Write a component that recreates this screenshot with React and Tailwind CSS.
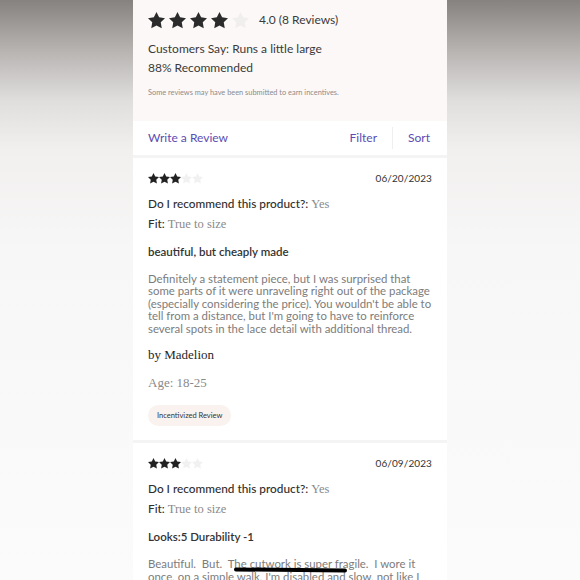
import React from 'react';

const STAR = '12,2 15.09,8.26 22,9.27 17,14.14 18.18,21.02 12,17.77 5.82,21.02 7,14.14 2,9.27 8.91,8.26';

function Stars({ count, size, gap, on, off }) {
  return (
    <div className={`flex items-center ${gap}`}>
      {[0, 1, 2, 3, 4].map((i) => (
        <svg key={i} width={size} height={size} viewBox="2 2 20 20">
          <polygon points={STAR} fill={i < count ? on : off} />
        </svg>
      ))}
    </div>
  );
}

function Review({ date, headline, lines, children }) {
  return (
    <div className="shrink-0 bg-white px-[15px]">
      <div className="flex items-center justify-between pt-[14px] h-[26px]">
        <Stars count={3} size={11} gap="gap-[0px]" on="#222222" off="#f1f1f1" />
        <span className="text-[10px] leading-[12px] text-[#333] tracking-[0.1px]">{date}</span>
      </div>
      <div className="mt-[12px] h-[16px] leading-[16px] text-[11.8px] whitespace-nowrap">
        <span className="font-medium text-[#2e2e2e]">Do I recommend this product?: </span>
        <span className="font-['Liberation_Serif',serif] text-[12.5px] text-[#8a8a8a]">Yes</span>
      </div>
      <div className="mt-[4px] h-[16px] leading-[16px] text-[11.8px] whitespace-nowrap">
        <span className="font-medium text-[#2e2e2e]">Fit: </span>
        <span className="font-['Liberation_Serif',serif] text-[12.5px] text-[#8a8a8a]">True to size</span>
      </div>
      <div className="mt-[12px] h-[16px] leading-[16px] text-[11.5px] font-semibold text-[#333]">{headline}</div>
      <div className="mt-[13px] text-[11.4px] leading-[12.4px] text-[#7c7c7c]">
        {lines.map((l, i) => (
          <div key={i} className="whitespace-pre">{l}</div>
        ))}
      </div>
      {children}
    </div>
  );
}

export default function App() {
  return (
    <div className="w-[580px] h-[580px] overflow-hidden flex font-['Lato','Open_Sans',sans-serif] bg-[linear-gradient(to_bottom,#858280_0px,#b6b3b1_50px,#e0dedd_100px,#f1f0ef_150px,#f8f7f7_250px,#fbfbfb_580px)]">
      <div className="w-[133px] shrink-0" />

      <div className="w-[314px] shrink-0 bg-[#f4f4f4] flex flex-col relative overflow-hidden">
        {/* summary */}
        <div className="shrink-0 bg-[#fcf8f7] h-[121px] px-[15px] pt-[11px]">
          <div className="flex items-center h-[18px]">
            <Stars count={4} size={17} gap="gap-[4px]" on="#2b2b2b" off="#f1efee" />
            <span className="ml-[10px] text-[12px] text-[#3a3a3a]">4.0 (8 Reviews)</span>
          </div>
          <div className="mt-[12px] h-[16px] leading-[16px] text-[12px] text-[#3a3a3a]">Customers Say: Runs a little large</div>
          <div className="mt-[3px] h-[16px] leading-[16px] text-[12px] text-[#3a3a3a]">88% Recommended</div>
          <div className="mt-[12px] h-[10px] leading-[10px] text-[7.4px] text-[#8c8c8c]">Some reviews may have been submitted to earn incentives.</div>
        </div>

        {/* actions */}
        <div className="shrink-0 bg-white h-[34px] flex items-center justify-between pl-[15px] pr-[17px] text-[12px] text-[#5b4db3]">
          <span>Write a Review</span>
          <div className="flex items-center gap-[15px]">
            <span>Filter</span>
            <div className="w-px h-[22px] bg-[#efefef]" />
            <span>Sort</span>
          </div>
        </div>

        <div className="shrink-0 h-[3px]" />

        <Review
          date="06/20/2023"
          headline="beautiful, but cheaply made"
          lines={[
            'Definitely a statement piece, but I was surprised that',
            'some parts of it were unraveling right out of the package',
            "(especially considering the price). You wouldn't be able to",
            "tell from a distance, but I'm going to have to reinforce",
            'several spots in the lace detail with additional thread.',
          ]}
        >
          <div className="mt-[12px] h-[16px] leading-[16px] font-['Liberation_Serif',serif] text-[13px] text-[#262626]">by Madelion</div>
          <div className="mt-[12px] h-[16px] leading-[16px] font-['Liberation_Serif',serif] text-[13px] text-[#8a8a8a]">Age: 18-25</div>
          <div className="mt-[9px] pb-[14px]">
            <span className="inline-flex items-center h-[21px] px-[9px] rounded-full bg-[#f9f2ef] text-[7.5px] text-[#333]">Incentivized Review</span>
          </div>
        </Review>

        <div className="shrink-0 h-[3px]" />

        <Review
          date="06/09/2023"
          headline="Looks:5 Durability -1"
          lines={[
            'Beautiful.  But.  The cutwork is super fragile.  I wore it',
            "once, on a simple walk, I'm disabled and slow, not like I",
          ]}
        />
        <div className="flex-1 bg-white" />

        {/* marker stroke drawn over the text */}
        <div className="absolute left-[101px] top-[568px] w-[113px] h-[4px] rounded-full bg-black rotate-[0.6deg]" />
      </div>

      <div className="flex-1" />
    </div>
  );
}
